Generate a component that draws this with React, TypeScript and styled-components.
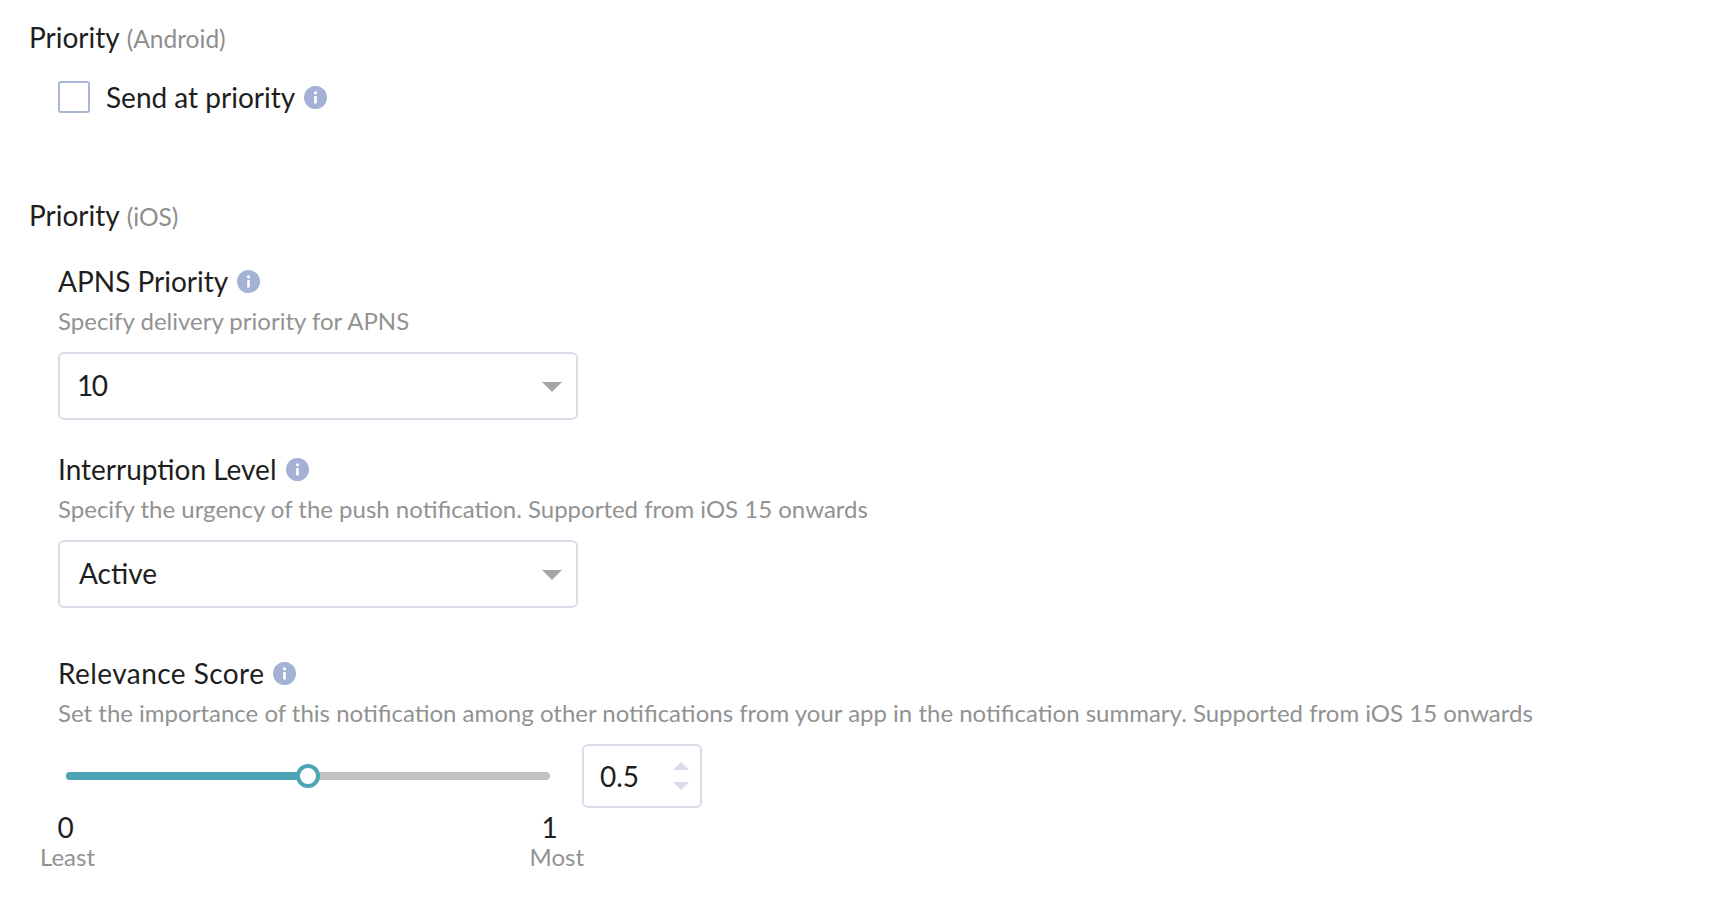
import React from "react";
import styled, { createGlobalStyle } from "styled-components";

const GlobalStyle = createGlobalStyle`
  html, body {
    margin: 0;
    background: #fff;
    font-family: "Lato", "Liberation Sans", sans-serif;
    color: #1e1e1e;
  }
`;

const Page = styled.div`
  width: 1728px;
  height: 908px;
  overflow: hidden;
  box-sizing: border-box;
  padding: 21px 0 0 29px;
`;

const SectionTitle = styled.div<{ $gap?: number }>`
  display: flex;
  align-items: baseline;
  gap: 7px;
  height: 32px;
  line-height: 32px;
  font-size: 28px;
  margin-top: ${(p) => p.$gap ?? 0}px;
`;

const Platform = styled.span`
  font-size: 24.5px;
  color: #8e8e8e;
`;

const Body = styled.div`
  padding-left: 29px;
`;

const CheckRow = styled.label`
  display: flex;
  align-items: center;
  height: 32px;
  margin-top: 28px;
  font-size: 28px;
`;

const Box = styled.span`
  width: 32px;
  height: 32px;
  box-sizing: border-box;
  border: 2px solid #a9b6d3;
  border-radius: 3px;
  margin-right: 16px;
`;

const FieldLabel = styled.div<{ $top: number; $spacing?: number }>`
  display: flex;
  align-items: center;
  height: 32px;
  margin-top: ${(p) => p.$top}px;
  font-size: 28px;
  letter-spacing: ${(p) => p.$spacing ?? 0}px;
`;

const InfoBadge = styled.svg`
  width: 23px;
  height: 23px;
  margin-left: 9px;
  flex: none;
`;

const Hint = styled.div`
  height: 28px;
  line-height: 28px;
  margin-top: 10px;
  font-size: 24px;
  color: #929292;
  white-space: nowrap;
`;

const SelectBox = styled.div`
  display: flex;
  align-items: center;
  justify-content: space-between;
  box-sizing: border-box;
  width: 520px;
  height: 68px;
  margin-top: 17px;
  padding: 0 14px 0 19px;
  border: 2px solid #d8dde9;
  border-radius: 6px;
  font-size: 28px;
`;

const SelectValue = styled.span<{ $tight?: boolean }>`
  padding-bottom: 3px;
  letter-spacing: ${(p) => (p.$tight ? "-1.5px" : "0")};
  margin-left: ${(p) => (p.$tight ? "-2px" : "0")};
`;

const Caret = styled.span`
  width: 0;
  height: 0;
  margin-top: 2px;
  border-left: 10px solid transparent;
  border-right: 10px solid transparent;
  border-top: 10px solid #a6a6a6;
`;

const SliderRow = styled.div`
  display: flex;
  align-items: center;
  margin-top: 17px;
  padding-left: 8px;
`;

const Track = styled.div`
  position: relative;
  width: 484px;
  height: 8px;
  border-radius: 4px;
  background: #c2c2c2;
  margin-right: 32px;
`;

const TrackFill = styled.div`
  height: 100%;
  border-radius: 4px;
  background: #4da4b4;
`;

const Thumb = styled.span`
  position: absolute;
  top: 50%;
  box-sizing: border-box;
  width: 24px;
  height: 24px;
  transform: translate(-50%, -50%);
  border: 4px solid #4da4b4;
  border-radius: 50%;
  background: #fff;
`;

const NumberBox = styled.div`
  display: flex;
  align-items: center;
  justify-content: space-between;
  box-sizing: border-box;
  width: 120px;
  height: 64px;
  padding: 0 11px 0 16px;
  border: 2px solid #d8dde9;
  border-radius: 6px;
  font-size: 28px;
`;

const Spinner = styled.div`
  display: flex;
  flex-direction: column;
  gap: 12px;
`;

const SpinArrow = styled.span<{ $up?: boolean }>`
  width: 0;
  height: 0;
  border-left: 8px solid transparent;
  border-right: 8px solid transparent;
  ${(p) => (p.$up ? "border-bottom" : "border-top")}: 8px solid #d8dde9;
`;

const Scale = styled.div`
  display: flex;
  justify-content: space-between;
  width: 544px;
  margin: 3px 0 0 -18px;
`;

const ScaleMark = styled.div`
  display: flex;
  flex-direction: column;
  align-items: center;
`;

const ScaleValue = styled.span<{ $shift: number }>`
  font-size: 28px;
  line-height: 32px;
  transform: translateX(${(p) => p.$shift}px);
`;

const ScaleHint = styled.span`
  font-size: 24px;
  line-height: 28px;
  color: #929292;
`;

const Info = () => (
  <InfoBadge viewBox="0 0 23 23">
    <circle cx="11.5" cy="11.5" r="11.5" fill="#a3b2d4" />
    <rect x="10.2" y="10" width="2.6" height="7.5" rx="0.6" fill="#fff" />
    <circle cx="11.5" cy="6.8" r="1.6" fill="#fff" />
  </InfoBadge>
);

export default function App() {
  const score = 0.5;
  return (
    <Page>
      <GlobalStyle />
      <SectionTitle>
        Priority <Platform>(Android)</Platform>
      </SectionTitle>
      <Body>
        <CheckRow>
          <Box />
          Send at priority
          <Info />
        </CheckRow>
      </Body>

      <SectionTitle $gap={86}>
        Priority <Platform>(iOS)</Platform>
      </SectionTitle>
      <Body>
        <FieldLabel $top={34}>
          APNS Priority
          <Info />
        </FieldLabel>
        <Hint>Specify delivery priority for APNS</Hint>
        <SelectBox>
          <SelectValue $tight>10</SelectValue>
          <Caret />
        </SelectBox>

        <FieldLabel $top={33}>
          Interruption Level
          <Info />
        </FieldLabel>
        <Hint>Specify the urgency of the push notification. Supported from iOS 15 onwards</Hint>
        <SelectBox>
          <SelectValue>Active</SelectValue>
          <Caret />
        </SelectBox>

        <FieldLabel $top={49} $spacing={0.44}>
          Relevance Score
          <Info />
        </FieldLabel>
        <Hint>
          Set the importance of this notification among other notifications from your app in the
          notification summary. Supported from iOS 15 onwards
        </Hint>
        <SliderRow>
          <Track>
            <TrackFill style={{ width: `${score * 100}%` }} />
            <Thumb style={{ left: `${score * 100}%` }} />
          </Track>
          <NumberBox>
            {score}
            <Spinner>
              <SpinArrow $up />
              <SpinArrow />
            </Spinner>
          </NumberBox>
        </SliderRow>
        <Scale>
          <ScaleMark>
            <ScaleValue $shift={-2}>0</ScaleValue>
            <ScaleHint>Least</ScaleHint>
          </ScaleMark>
          <ScaleMark>
            <ScaleValue $shift={-7}>1</ScaleValue>
            <ScaleHint>Most</ScaleHint>
          </ScaleMark>
        </Scale>
      </Body>
    </Page>
  );
}
